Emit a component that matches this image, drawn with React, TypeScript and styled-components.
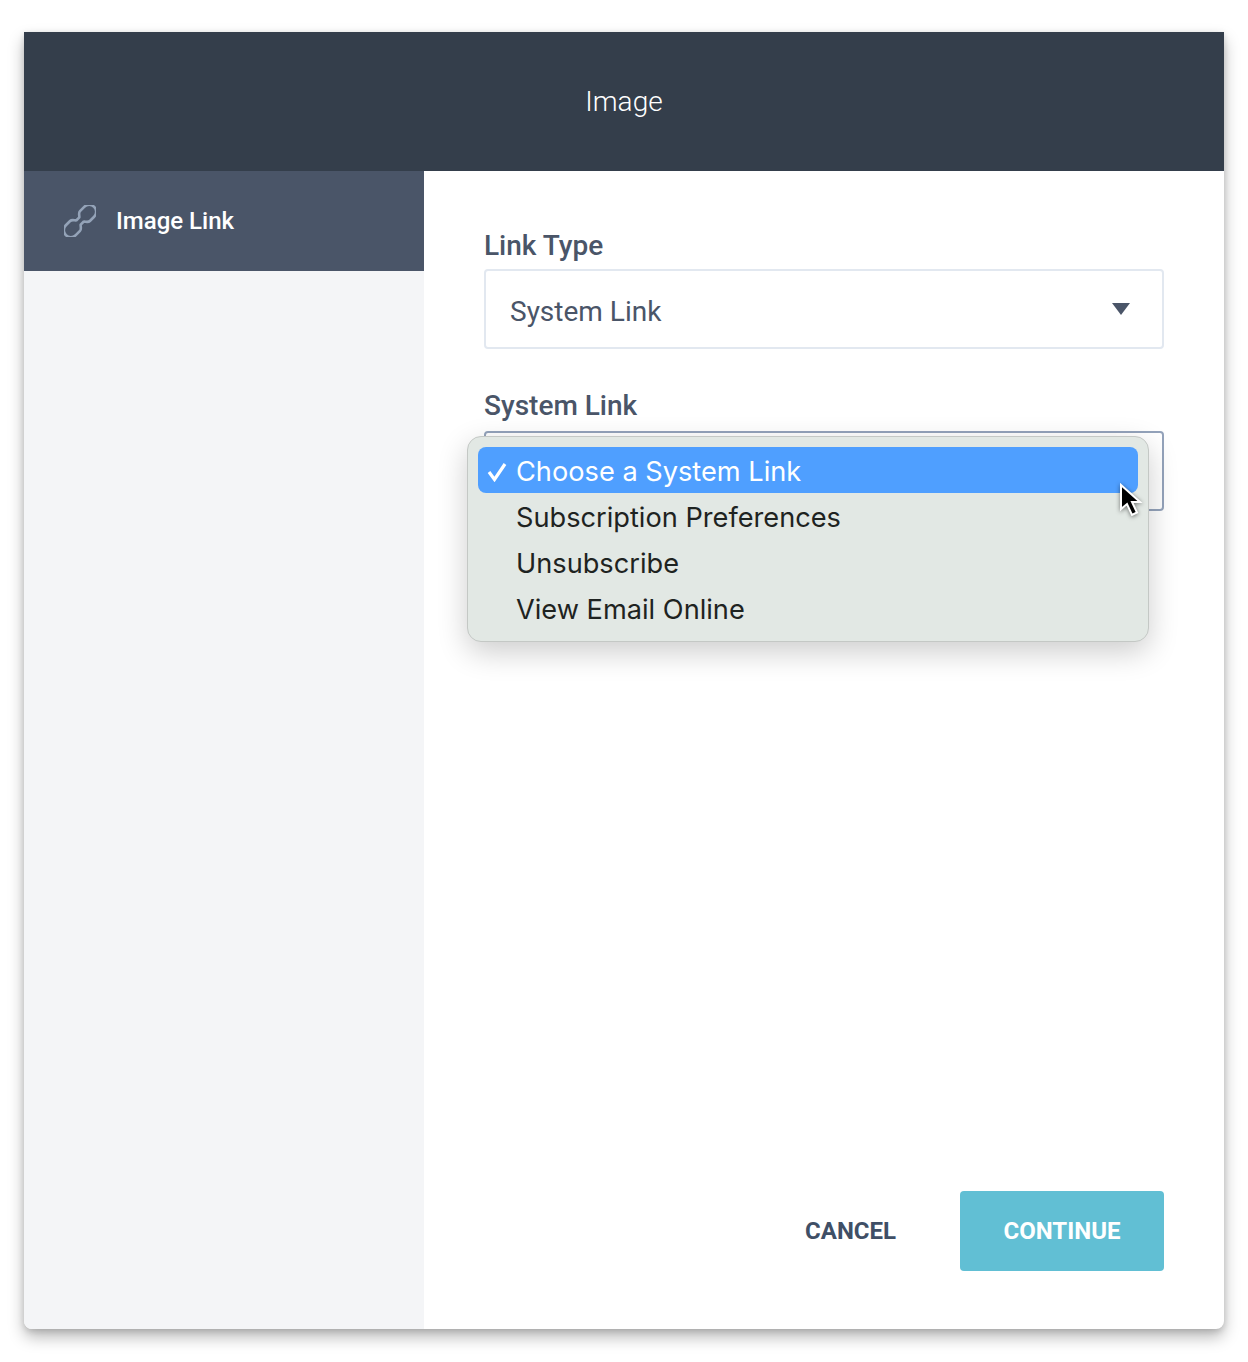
import React from "react";
import styled, { createGlobalStyle } from "styled-components";

const Global = createGlobalStyle`
  html, body { margin: 0; padding: 0; background: #fff; }
  body { font-family: Roboto, "Liberation Sans", sans-serif; }
  * { box-sizing: border-box; }
`;

const Page = styled.div`
  width: 1248px;
  height: 1362px;
  padding: 32px 24px 33px;
`;

const Dialog = styled.div`
  width: 1200px;
  height: 1297px;
  display: flex;
  flex-direction: column;
  border-radius: 0 0 8px 8px;
  background: #fff;
  box-shadow: 0 8px 16px rgba(0, 0, 0, 0.28), 0 2px 6px rgba(0, 0, 0, 0.14);
`;

const Header = styled.header`
  height: 139px;
  flex: none;
  display: flex;
  align-items: center;
  justify-content: center;
  background: #343e4b;
  color: #fff;
  font-size: 28px;
  font-weight: 300;
`;

const Body = styled.div`
  flex: 1;
  display: flex;
  min-height: 0;
`;

const Sidebar = styled.aside`
  width: 400px;
  flex: none;
  background: #f4f5f7;
  border-bottom-left-radius: 8px;
`;

const NavItem = styled.div`
  height: 100px;
  display: flex;
  align-items: center;
  gap: 20px;
  padding-left: 40px;
  background: #4a5568;
  color: #fff;
  font-size: 24px;
  font-weight: 500;
`;

const Content = styled.main`
  flex: 1;
  position: relative;
  display: flex;
  flex-direction: column;
  padding: 60px 60px 58px;
`;

const Label = styled.div`
  height: 30px;
  margin-bottom: 8px;
  color: #4a5568;
  font-size: 28px;
  line-height: 30px;
  font-weight: 500;
`;

const Field = styled.div<{ $focused?: boolean }>`
  height: 80px;
  margin-top: ${(p) => (p.$focused ? "2px" : "0")};
  margin-bottom: ${(p) => (p.$focused ? "0" : "42px")};
  display: flex;
  align-items: center;
  justify-content: space-between;
  padding: 4px 32px 0 24px;
  border: 2px solid ${(p) => (p.$focused ? "#94a3bb" : "#e2e8f0")};
  border-radius: 4px;
  background: #fff;
  color: #4a5568;
  font-size: 28px;
`;

const Caret = styled.span`
  width: 0;
  height: 0;
  margin-top: -4px;
  border-left: 9px solid transparent;
  border-right: 9px solid transparent;
  border-top: 12px solid #4a5568;
`;

const Actions = styled.div`
  margin-top: auto;
  display: flex;
  align-items: center;
  justify-content: flex-end;
  gap: 64px;
`;

const Cancel = styled.button`
  padding: 0;
  border: 0;
  background: none;
  color: #3f4f66;
  font: 700 24px Roboto, sans-serif;
`;

const Continue = styled.button`
  width: 204px;
  height: 80px;
  border: 0;
  border-radius: 4px;
  background: #61bfd4;
  color: #fff;
  font: 700 24px Roboto, sans-serif;
`;

const Menu = styled.div`
  position: absolute;
  left: 43px;
  top: 265px;
  width: 682px;
  height: 206px;
  padding: 10px;
  border: 1px solid #c4c8c5;
  border-radius: 14px;
  background: #e2e8e4;
  box-shadow: 0 10px 30px rgba(0, 0, 0, 0.2);
  font-family: Inter, Roboto, sans-serif;
`;

const Option = styled.div<{ $selected?: boolean }>`
  position: relative;
  height: 46px;
  padding-left: 38px;
  border-radius: 8px;
  background: ${(p) => (p.$selected ? "#4f9fff" : "transparent")};
  color: ${(p) => (p.$selected ? "#fff" : "#1e2321")};
  font-size: 27.2px;
  line-height: 49px;
  white-space: nowrap;
`;

const Check = styled.svg`
  position: absolute;
  left: 9px;
  top: 15px;
`;

const Cursor = styled.svg`
  position: absolute;
  left: 695px;
  top: 312px;
  filter: drop-shadow(0 1px 2px rgba(0, 0, 0, 0.5));
`;

const options = ["Choose a System Link", "Subscription Preferences", "Unsubscribe", "View Email Online"];

export default function App() {
  return (
    <Page>
      <Global />
      <Dialog>
        <Header>Image</Header>
        <Body>
          <Sidebar>
            <NavItem>
              <svg width="32" height="32" viewBox="0 0 32 32" fill="none" stroke="#94a3b8" strokeWidth="2.6">
                <path
                  transform="rotate(-45 16 16)"
                  d="M3 9A7 7 0 1 0 3 23H9C11.500 23 12.500 20 14 19H18C19.500 20 20.500 23 23 23H29A7 7 0 1 0 29 9H23C20.500 9 19.500 12 18 13H14C12.500 12 11.500 9 9 9Z"
                />
              </svg>
              Image Link
            </NavItem>
          </Sidebar>
          <Content>
            <Label>Link Type</Label>
            <Field>
              System Link
              <Caret />
            </Field>
            <Label>System Link</Label>
            <Field $focused />
            <Actions>
              <Cancel>CANCEL</Cancel>
              <Continue>CONTINUE</Continue>
            </Actions>
            <Menu>
              {options.map((o, i) => (
                <Option key={o} $selected={i === 0}>
                  {i === 0 && (
                    <Check width="20" height="20" viewBox="0 0 20 20" fill="none" stroke="#fff" strokeWidth="3.200">
                      <path d="M2 10l5.500 7.500L18 2" />
                    </Check>
                  )}
                  {o}
                </Option>
              ))}
            </Menu>
            <Cursor width="24" height="36" viewBox="0 0 24 36">
              <path d="M2 2v24l6-5 5 11 5-2.500-5-10.500h8z" fill="#000" stroke="#fff" strokeWidth="2" />
            </Cursor>
          </Content>
        </Body>
      </Dialog>
    </Page>
  );
}
